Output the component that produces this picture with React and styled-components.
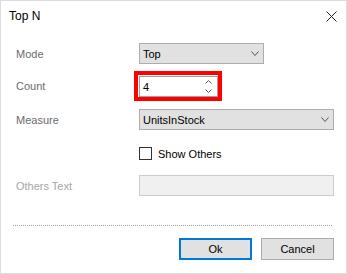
import React from 'react';
import styled, { createGlobalStyle } from 'styled-components';

const GlobalStyle = createGlobalStyle`
  html, body {
    margin: 0;
    padding: 0;
    background: #fff;
  }
  body {
    font-family: 'Liberation Sans', Arial, sans-serif;
    font-size: 11px;
    color: #000;
  }
`;

const Window = styled.div`
  box-sizing: border-box;
  width: 347px;
  height: 274px;
  border: 1px solid #dcdcdc;
  background: #fff;
  display: flex;
  flex-direction: column;
`;

const TitleBar = styled.div`
  height: 30px;
  display: flex;
  align-items: center;
  justify-content: space-between;
  padding: 0 9px 0 8px;
`;

const Title = styled.span`
  font-size: 12px;
  color: #000;
`;

const CloseButton = styled.button`
  width: 12px;
  height: 12px;
  padding: 0;
  border: none;
  background: none;
  display: flex;
  align-items: center;
  justify-content: center;
`;

const Form = styled.div`
  display: flex;
  flex-direction: column;
  padding: 12px 12px 0 15px;
`;

const Row = styled.div`
  display: grid;
  grid-template-columns: 123px 1fr;
  align-items: center;
  height: ${({ h }) => h}px;
  margin-top: ${({ top }) => top || 0}px;
`;

const Label = styled.span`
  color: ${({ disabled }) => (disabled ? '#a6a6a6' : '#6d6d6d')};
`;

const Combo = styled.div`
  box-sizing: border-box;
  width: ${({ w }) => w}px;
  height: 21px;
  background: #e1e1e1;
  border: 1px solid #adadad;
  display: flex;
  align-items: center;
  justify-content: space-between;
  padding: 0 4px 0 3px;
`;

const Highlight = styled.div`
  box-sizing: border-box;
  width: 88px;
  height: 30px;
  margin-left: -5px;
  border: 4px solid #ff0000;
  padding: 1px 0 0 1px;
`;

const Spinner = styled.div`
  box-sizing: border-box;
  width: 79px;
  height: 21px;
  background: #fff;
  border: 1px solid #a0a0a0;
  display: flex;
  align-items: center;
  justify-content: space-between;
  padding: 0 5px 0 3px;
`;

const Arrows = styled.div`
  display: flex;
  flex-direction: column;
  gap: 5px;
`;

const CheckRow = styled.label`
  display: flex;
  align-items: center;
  gap: 6px;
`;

const Box = styled.span`
  box-sizing: border-box;
  width: 13px;
  height: 13px;
  border: 1px solid #333;
  background: #fff;
`;

const TextInput = styled.div`
  box-sizing: border-box;
  width: 195px;
  height: 21px;
  background: #f0f0f0;
  border: 1px solid #cccccc;
`;

const Divider = styled.div`
  margin: 29px 2px 0 -3px;
  border-top: 1px dotted #a0a0a0;
`;

const Buttons = styled.div`
  display: flex;
  justify-content: flex-end;
  gap: 9px;
  margin-top: 12px;
`;

const Button = styled.button`
  box-sizing: border-box;
  width: 73px;
  height: 22px;
  padding: 0;
  font-family: inherit;
  font-size: 11px;
  color: #000;
  background: #e1e1e1;
  border: ${({ primary }) => (primary ? '2px solid #0078d7' : '1px solid #adadad')};
`;

const Chevron = ({ w = 8, h = 4, up }) => (
  <svg width={w} height={h + 1} viewBox={`0 0 ${w} ${h + 1}`}>
    <path
      d={up ? `M0.5 ${h + 0.5} L${w / 2} 0.5 L${w - 0.5} ${h + 0.5}` : `M0.5 0.5 L${w / 2} ${h + 0.5} L${w - 0.5} 0.5`}
      fill="none"
      stroke="#555"
      strokeWidth="1"
    />
  </svg>
);

export default function App() {
  return (
    <>
      <GlobalStyle />
      <Window>
        <TitleBar>
          <Title>Top N</Title>
          <CloseButton>
            <svg width="11" height="11" viewBox="0 0 11 11">
              <path d="M0.5 0.5 L10.5 10.5 M10.5 0.5 L0.5 10.5" stroke="#222" strokeWidth="1" />
            </svg>
          </CloseButton>
        </TitleBar>
        <Form>
          <Row h={21}>
            <Label>Mode</Label>
            <Combo w={125}>
              <span>Top</span>
              <Chevron />
            </Combo>
          </Row>
          <Row h={30} top={7}>
            <Label>Count</Label>
            <Highlight>
              <Spinner>
                <span>4</span>
                <Arrows>
                  <Chevron w={7} h={3} up />
                  <Chevron w={7} h={3} />
                </Arrows>
              </Spinner>
            </Highlight>
          </Row>
          <Row h={21} top={8}>
            <Label>Measure</Label>
            <Combo w={195}>
              <span>UnitsInStock</span>
              <Chevron />
            </Combo>
          </Row>
          <Row h={13} top={17}>
            <span />
            <CheckRow>
              <Box />
              <span>Show Others</span>
            </CheckRow>
          </Row>
          <Row h={21} top={15}>
            <Label disabled>Others Text</Label>
            <TextInput />
          </Row>
          <Divider />
          <Buttons>
            <Button primary>Ok</Button>
            <Button>Cancel</Button>
          </Buttons>
        </Form>
      </Window>
    </>
  );
}
